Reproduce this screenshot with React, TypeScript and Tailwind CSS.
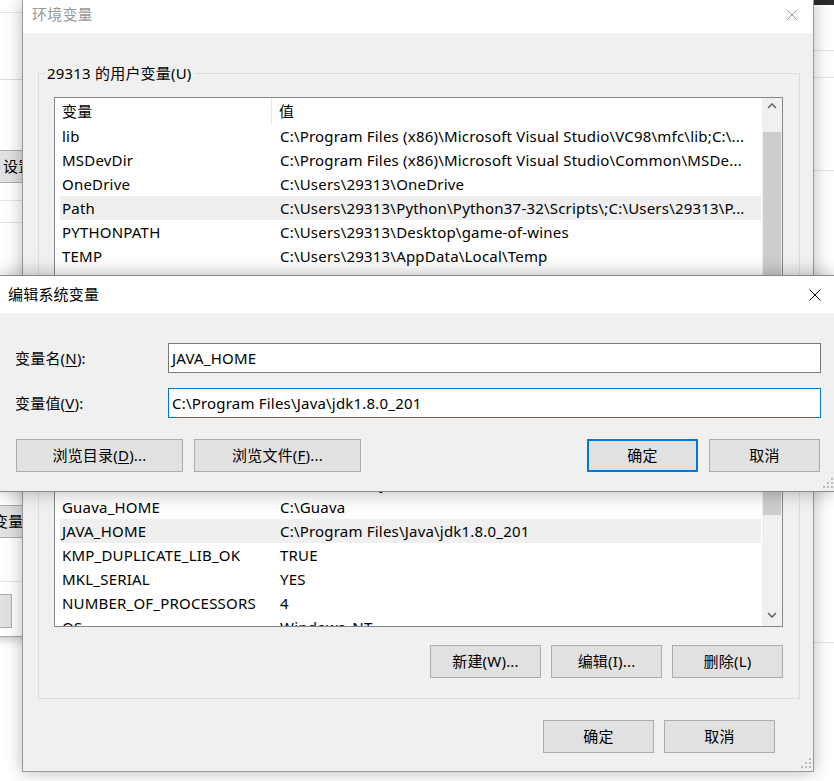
import React from 'react';

// Types
type Row = [string, string];

const userVars: Row[] = [
    ['lib', 'C:\\Program Files (x86)\\Microsoft Visual Studio\\VC98\\mfc\\lib;C:\\...'],
    ['MSDevDir', 'C:\\Program Files (x86)\\Microsoft Visual Studio\\Common\\MSDe...'],
    ['OneDrive', 'C:\\Users\\29313\\OneDrive'],
    ['Path', 'C:\\Users\\29313\\Python\\Python37-32\\Scripts\\;C:\\Users\\29313\\P...'],
    ['PYTHONPATH', 'C:\\Users\\29313\\Desktop\\game-of-wines'],
    ['TEMP', 'C:\\Users\\29313\\AppData\\Local\\Temp'],
    ['TMP', 'C:\\Users\\29313\\AppData\\Local\\Temp'],
];

const sysVars: Row[] = [
    ['ComSpec', 'C:\\WINDOWS\\system32\\cmd.exe'],
    ['DriverData', 'C:\\Windows\\System32\\Drivers\\DriverData'],
    ['Guava_HOME', 'C:\\Guava'],
    ['JAVA_HOME', 'C:\\Program Files\\Java\\jdk1.8.0_201'],
    ['KMP_DUPLICATE_LIB_OK', 'TRUE'],
    ['MKL_SERIAL', 'YES'],
    ['NUMBER_OF_PROCESSORS', '4'],
    ['OS', 'Windows_NT'],
];

const Chevron = ({ dir }: { dir: 'up' | 'down' }) => (
    <svg width="10" height="6" viewBox="0 0 10 6">
        <polyline
            points={dir === 'up' ? '1,5 5,1 9,5' : '1,1 5,5 9,1'}
            fill="none"
            stroke="#606060"
            strokeWidth="1.5"
        />
    </svg>
);

const CloseX = ({ color }: { color: string }) => (
    <svg width="12" height="12" viewBox="0 0 12 12">
        <path d="M0.5 0.5 L11.5 11.5 M11.5 0.5 L0.5 11.5" stroke={color} strokeWidth="1" />
    </svg>
);

const Grip = () => (
    <svg width="10" height="10" viewBox="0 0 10 10" fill="#bdbdbd">
        <rect x="8" y="0" width="2" height="2" />
        <rect x="4" y="4" width="2" height="2" />
        <rect x="8" y="4" width="2" height="2" />
        <rect x="0" y="8" width="2" height="2" />
        <rect x="4" y="8" width="2" height="2" />
        <rect x="8" y="8" width="2" height="2" />
    </svg>
);

const Btn = ({
    className,
    primary,
    children,
}: {
    className: string;
    primary?: boolean;
    children: React.ReactNode;
}) => (
    <button
        type="button"
        className={`flex h-[33px] items-center justify-center whitespace-nowrap bg-[#e1e1e1] text-black ${
            primary ? 'border-2 border-[#0078d7]' : 'border border-[#adadad]'
        } ${className}`}
    >
        {children}
    </button>
);

const VarList = ({
    rows,
    selected,
    boxClass,
    thumbClass,
}: {
    rows: Row[];
    selected: number;
    boxClass: string;
    thumbClass: string;
}) => (
    <div className={`flex overflow-hidden border border-[#828790] bg-white ${boxClass}`}>
        <div className="min-w-0 flex-1 overflow-hidden">
            {/* Header */}
            <div className="flex h-[26px] items-center">
                <div className="h-full w-[217px] shrink-0 border-r border-[#e5e5e5] pl-[7px] leading-[26px]">
                    变量
                </div>
                <div className="pl-[7px]">值</div>
            </div>
            {rows.map(([name, value], i) => (
                <div
                    key={name}
                    className={`ml-[5px] mr-[1px] flex h-[24px] items-center leading-[24px] ${
                        i === selected ? 'bg-[#efefef]' : ''
                    }`}
                >
                    <div className="w-[220px] shrink-0 pl-[2px] whitespace-nowrap">{name}</div>
                    <div className="min-w-0 flex-1 overflow-hidden whitespace-nowrap">{value}</div>
                </div>
            ))}
        </div>
        {/* Scrollbar */}
        <div className="flex w-[20px] shrink-0 flex-col bg-[#f0f0f0]">
            <div className="flex h-[22px] items-center justify-center">
                <Chevron dir="up" />
            </div>
            <div className="flex-1 px-[1px]">
                <div className={`bg-[#cdcdcd] ${thumbClass}`} />
            </div>
            <div className="flex h-[22px] items-center justify-center">
                <Chevron dir="down" />
            </div>
        </div>
    </div>
);

const App: React.FC = () => {
    return (
        <div className="relative h-[781px] w-[834px] overflow-hidden bg-white font-['Noto_Sans','Noto_Sans_CJK_SC',sans-serif] text-[15px] tracking-[0.2px] text-black">
            {/* Window behind, left */}
            <div className="absolute left-[-120px] top-0 flex h-[637px] w-[150px] flex-col border-b border-[#a8a8a8] bg-white shadow-[0_2px_10px_rgba(0,0,0,0.25)]">
                <div className="h-[13px] border-b border-[#e3e3e3]" />
                <div className="h-[67px] border-b border-[#dcdcdc]" />
                <div className="h-[70px]" />
                <div className="flex h-[33px] items-center border border-[#adadad] bg-[#e1e1e1] pl-[122px] whitespace-nowrap">
                    设置(S)...
                </div>
                <div className="h-[18px] border-b border-[#e3e3e3]" />
                <div className="h-[22px] border-b border-[#e3e3e3]" />
                <div className="h-[282px]" />
                <div className="flex h-[33px] items-center border border-[#adadad] bg-[#e1e1e1] pl-[112px] whitespace-nowrap">
                    变量(N)...
                </div>
                <div className="h-[44px] border-b border-[#e3e3e3]" />
                <div className="h-[12px]" />
                <div className="h-[34px] w-[132px] border border-[#adadad] bg-[#e1e1e1]" />
            </div>

            {/* Window behind, right */}
            <div className="absolute left-[790px] top-0 flex h-[781px] w-[44px] flex-col bg-white">
                <div className="h-[5px] bg-[#2b2b2b]" />
                <div className="h-[46px] border-b border-[#e3e3e3]" />
                <div className="h-[27px] border-b border-[#e3e3e3]" />
                <div className="h-[93px] border-b border-[#e3e3e3]" />
                <div className="h-[472px] border-b border-[#e3e3e3]" />
            </div>

            {/* 环境变量 window */}
            <div className="absolute left-[22px] top-0 flex h-[772px] w-[792px] flex-col border-x border-b border-[#9a9a9a] bg-[#f0f0f0] shadow-[0_0_16px_rgba(0,0,0,0.28)]">
                <div className="flex h-[33px] shrink-0 items-center justify-between bg-white pb-[4px] pl-[9px] pr-[10px]">
                    <span className="text-[15px] text-[#999999]">环境变量</span>
                    <div className="flex w-[22px] justify-center">
                        <CloseX color="#9a9a9a" />
                    </div>
                </div>

                <div className="flex flex-1 flex-col pl-[15px] pr-[13px] pt-[30px]">
                    <fieldset className="border border-[#dcdcdc] pb-[19px] pl-[15px] pr-[16px] pt-[14px]">
                        <legend className="ml-[-9px] px-[2px] leading-[20px]">29313 的用户变量(U)</legend>
                        <VarList rows={userVars} selected={3} boxClass="h-[201px]" thumbClass="mt-[19px] h-[150px]" />
                        <div className="mt-[19px] flex justify-end gap-[10px]">
                            <Btn className="w-[111px]">新建(N)...</Btn>
                            <Btn className="w-[111px]">编辑(E)...</Btn>
                            <Btn className="w-[111px]">删除(D)</Btn>
                        </div>
                    </fieldset>

                    <fieldset className="mt-[16px] border border-[#dcdcdc] pb-[20px] pl-[15px] pr-[16px] pt-[14px]">
                        <legend className="ml-[-9px] px-[2px] leading-[20px]">系统变量(S)</legend>
                        <VarList rows={sysVars} selected={3} boxClass="h-[207px]" thumbClass="mt-[10px] h-[62px]" />
                        <div className="mt-[18px] flex justify-end gap-[10px]">
                            <Btn className="w-[111px]">新建(W)...</Btn>
                            <Btn className="w-[111px]">编辑(I)...</Btn>
                            <Btn className="w-[111px]">删除(L)</Btn>
                        </div>
                    </fieldset>

                    <div className="mr-[25px] mt-[21px] flex justify-end gap-[10px]">
                        <Btn className="w-[111px]">确定</Btn>
                        <Btn className="w-[111px]">取消</Btn>
                    </div>
                </div>

                <div className="absolute bottom-[3px] right-[2px]">
                    <Grip />
                </div>
            </div>

            {/* 编辑系统变量 dialog */}
            <div className="absolute left-0 top-[275px] flex h-[217px] w-[834px] flex-col border-y border-[#8a8a8a] bg-[#f0f0f0] shadow-[0_0_18px_rgba(0,0,0,0.3)]">
                <div className="flex h-[37px] shrink-0 items-center justify-between bg-white pl-[8px] pr-[8px]">
                    <span className="text-[15px]">编辑系统变量</span>
                    <div className="flex w-[22px] justify-center">
                        <CloseX color="#000000" />
                    </div>
                </div>

                <div className="flex flex-col pl-[15px] pr-[13px] pt-[30px]">
                    <div className="flex items-center">
                        <label className="w-[153px] shrink-0">
                            变量名(<span className="underline underline-offset-2">N</span>):
                        </label>
                        <div className="flex h-[30px] flex-1 items-center border border-[#7a7a7a] bg-white pl-[3px]">
                            JAVA_HOME
                        </div>
                    </div>
                    <div className="mt-[15px] flex items-center">
                        <label className="w-[153px] shrink-0">
                            变量值(<span className="underline underline-offset-2">V</span>):
                        </label>
                        <div className="flex h-[30px] flex-1 items-center border border-[#0078d7] bg-white pl-[3px]">
                            C:\Program Files\Java\jdk1.8.0_201
                        </div>
                    </div>

                    <div className="mt-[21px] flex justify-between pl-[1px] pr-[1px]">
                        <div className="flex gap-[11px]">
                            <Btn className="w-[167px]">
                                浏览目录(<span className="underline underline-offset-2">D</span>)...
                            </Btn>
                            <Btn className="w-[167px]">
                                浏览文件(<span className="underline underline-offset-2">F</span>)...
                            </Btn>
                        </div>
                        <div className="flex gap-[11px]">
                            <Btn className="w-[111px]" primary>
                                确定
                            </Btn>
                            <Btn className="w-[111px]">取消</Btn>
                        </div>
                    </div>
                </div>

                <div className="absolute bottom-[3px] right-[1px]">
                    <Grip />
                </div>
            </div>
        </div>
    );
};

export default App;
